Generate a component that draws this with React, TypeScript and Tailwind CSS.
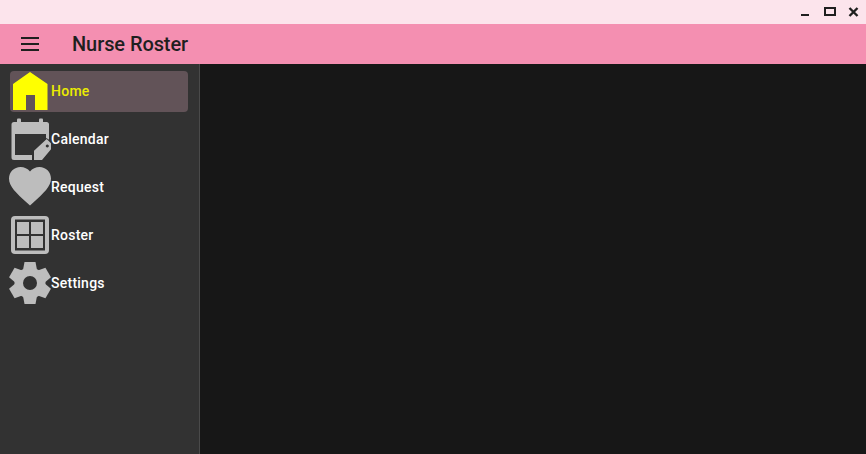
const teeth = [0, 60, 120, 180, 240, 300];

function HomeIcon() {
  return (
    <svg width="42" height="42" viewBox="0 0 42 42" className="shrink-0 -ml-px -mt-px">
      <path fill="#ffff00" fillRule="evenodd" d="M21 2 L38.5 14 V40 H4 V14 Z M17 25 V40 H26 V25 Z" />
    </svg>
  );
}

function CalendarIcon() {
  return (
    <svg width="42" height="42" viewBox="0 0 42 42" className="shrink-0 -ml-px -mt-px">
      <g fill="#bdbdbd">
        <rect x="8" y="0.5" width="4" height="6" rx="1" />
        <rect x="30" y="0.5" width="4" height="6" rx="1" />
        <path d="M5 4 H37.5 a2.5 2.5 0 0 1 2.5 2.5 V21 L37 24 V16 H6 V37 H23 V42 H5 a2.5 2.5 0 0 1 -2.5 -2.5 V6.5 A2.5 2.5 0 0 1 5 4 Z" />
        <path
          fillRule="evenodd"
          stroke="#323232"
          strokeWidth="1.5"
          paintOrder="stroke"
          d="M25 42 V32.7 L37.7 21 L44.6 28 L33 42 Z M38.3 26.4 a1.5 1.5 0 1 0 0.01 0 Z"
        />
      </g>
    </svg>
  );
}

function HeartIcon() {
  return (
    <svg width="42" height="42" viewBox="2 2.52 20 20" className="shrink-0 -ml-px -mt-px">
      <path
        fill="#bdbdbd"
        d="M12 21.35l-1.45-1.32C5.4 15.36 2 12.28 2 8.5 2 5.42 4.42 3 7.5 3c1.74 0 3.41.81 4.5 2.09C13.09 3.81 14.76 3 16.5 3 19.58 3 22 5.42 22 8.5c0 3.78-3.4 6.86-8.55 11.54L12 21.35z"
      />
    </svg>
  );
}

function RosterIcon() {
  return (
    <svg width="42" height="42" viewBox="0 0 42 42" className="shrink-0 -ml-px -mt-px">
      <rect x="2" y="2" width="38" height="38" rx="4" fill="#bdbdbd" />
      <rect x="6" y="5.5" width="30" height="31" fill="#323232" />
      <g fill="#bdbdbd">
        <rect x="8" y="8" width="12" height="12" />
        <rect x="22" y="8" width="12" height="12" />
        <rect x="8" y="22" width="12" height="12" />
        <rect x="22" y="22" width="12" height="12" />
      </g>
    </svg>
  );
}

function GearIcon() {
  return (
    <svg width="42" height="42" viewBox="0 0 42 42" className="shrink-0 -ml-px -mt-px">
      <circle cx="21" cy="21" r="15.5" fill="#bdbdbd" />
      {teeth.map((a) => (
        <polygon key={a} points="14,8 15.5,0 26.5,0 28,8" fill="#bdbdbd" transform={`rotate(${a} 21 21)`} />
      ))}
      <circle cx="21" cy="21" r="7" fill="#323232" />
    </svg>
  );
}

const items = [
  { label: "Home", Icon: HomeIcon, active: true },
  { label: "Calendar", Icon: CalendarIcon, active: false },
  { label: "Request", Icon: HeartIcon, active: false },
  { label: "Roster", Icon: RosterIcon, active: false },
  { label: "Settings", Icon: GearIcon, active: false },
];

export default function App() {
  return (
    <div className="flex h-[454px] w-[866px] flex-col overflow-hidden bg-[#171717] font-['Roboto',sans-serif]">
      <div className="flex h-6 shrink-0 justify-end bg-[#fce4ec] pr-px">
        <svg width="24" height="24" viewBox="0 0 24 24">
          <rect x="8" y="14" width="8" height="2" fill="#1f1f1f" />
        </svg>
        <svg width="24" height="24" viewBox="0 0 24 24">
          <rect x="8" y="8" width="10" height="7" fill="none" stroke="#1f1f1f" strokeWidth="2" />
        </svg>
        <svg width="24" height="24" viewBox="0 0 24 24">
          <path d="M8.5 8 L16.5 16 M16.5 8 L8.5 16" fill="none" stroke="#1f1f1f" strokeWidth="2.4" />
        </svg>
      </div>
      <header className="flex h-10 shrink-0 items-center bg-[#f48fb1] pl-[18px] text-[#1f1f1f]">
        <svg width="24" height="24" viewBox="0 0 24 24" className="shrink-0">
          <path d="M3 5h18v2H3zM3 11h18v2H3zM3 17h18v2H3z" fill="#1f1f1f" />
        </svg>
        <h1 className="ml-[30px] text-xl font-medium tracking-[-0.08px]">Nurse Roster</h1>
      </header>
      <div className="flex min-h-0 flex-1">
        <nav className="flex w-[200px] shrink-0 flex-col gap-[7px] border-r border-[#4a4a4a] bg-[#323232] pt-[7px]">
          {items.map(({ label, Icon, active }) => (
            <div
              key={label}
              className={`ml-2.5 mr-[11px] flex h-[41px] items-start rounded ${active ? "bg-[#625358]" : ""}`}
            >
              <Icon />
              <span
                className={`mb-[2px] self-center text-sm font-medium tracking-[0.25px] ${active ? "text-[#ecec00]" : "text-white"}`}
              >
                {label}
              </span>
            </div>
          ))}
        </nav>
        <main className="flex-1 bg-[#171717]" />
      </div>
    </div>
  );
}
